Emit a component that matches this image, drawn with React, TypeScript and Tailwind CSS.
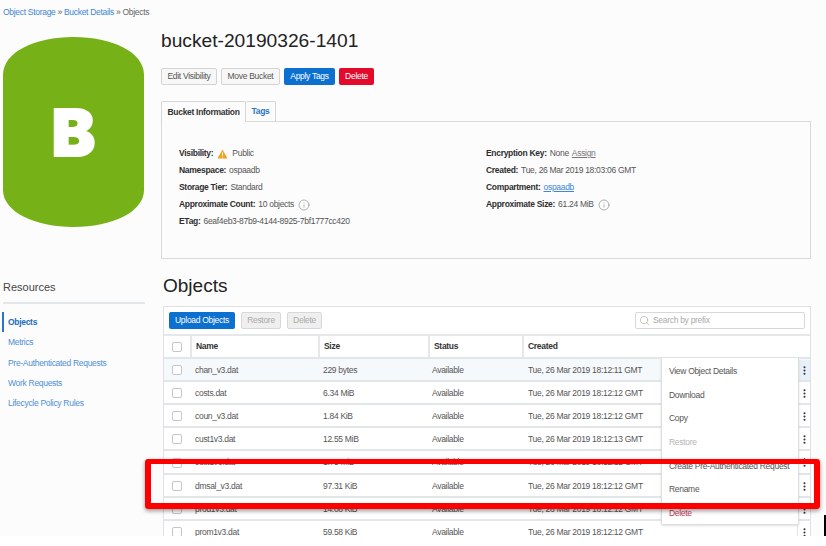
import { Info, MoreVertical, Search } from 'lucide-react';

const resources = ['Objects', 'Metrics', 'Pre-Authenticated Requests', 'Work Requests', 'Lifecycle Policy Rules'];

const objects = [
  ['chan_v3.dat', '229 bytes', 'Tue, 26 Mar 2019 18:12:11 GMT'],
  ['costs.dat', '6.34 MiB', 'Tue, 26 Mar 2019 18:12:12 GMT'],
  ['coun_v3.dat', '1.84 KiB', 'Tue, 26 Mar 2019 18:12:12 GMT'],
  ['cust1v3.dat', '12.55 MiB', 'Tue, 26 Mar 2019 18:12:13 GMT'],
  ['cust1v3.dat', '1.75 MiB', 'Tue, 26 Mar 2019 18:12:12 GMT'],
  ['dmsal_v3.dat', '97.31 KiB', 'Tue, 26 Mar 2019 18:12:12 GMT'],
  ['prod1v3.dat', '14.08 KiB', 'Tue, 26 Mar 2019 18:12:12 GMT'],
  ['prom1v3.dat', '59.58 KiB', 'Tue, 26 Mar 2019 18:12:12 GMT'],
];

const menu = ['View Object Details', 'Download', 'Copy', 'Restore', 'Create Pre-Authenticated Request', 'Rename', 'Delete'];

function Field({ label, children }: { label: string; children: React.ReactNode }) {
  return (
    <div className="flex h-[17px] items-center gap-[3px] whitespace-nowrap">
      <span className="font-bold text-[#2f2f2f]">{label}</span>
      {children}
    </div>
  );
}

function Check() {
  return <div className="h-[10px] w-[10px] rounded-[2px] border border-[#c4c6c8] bg-white" />;
}

export default function App() {
  return (
    <div className="relative h-[546px] w-[826px] overflow-hidden bg-white font-['Liberation_Sans',sans-serif] text-[8.500px] tracking-[-0.300px] text-[#555]">
      <div className="flex h-[536px] flex-col overflow-hidden bg-[#fcfcfc]">
        <div className="flex h-[25px] shrink-0 items-center gap-[2px] pl-[3px]">
          <span className="text-[#3f86d4]">Object Storage</span>
          <span>»</span>
          <span className="text-[#3f86d4]">Bucket Details</span>
          <span>»</span>
          <span className="text-[#666]">Objects</span>
        </div>

        <div className="flex min-h-0 flex-1">
          <aside className="w-[161px] shrink-0 pl-[3px]">
            <div className="relative mt-[12px] flex h-[190px] w-[141px] items-center justify-center">
              <svg viewBox="0 0 141 190" className="absolute inset-0 h-full w-full">
                <path d="M0 38C0 15 32 0 70.500 0C109 0 141 15 141 38V153C141 175 109 190 70.500 190C32 190 0 175 0 153Z" fill="#76b117" />
              </svg>
              <span className="relative font-['Inter',sans-serif] text-[65px] leading-none font-black tracking-normal text-white [-webkit-text-stroke:2px_white]">B</span>
            </div>
            <h2 className="mt-[52px] h-[16px] text-[11px] leading-[16px] tracking-normal text-[#444]">Resources</h2>
            <div className="mt-[7px] h-[2px] w-[142px] bg-[#e3e6e8]" />
            <ul className="mt-[8px]">
              {resources.map((item, i) => (
                <li
                  key={item}
                  className={i === 0
                    ? 'flex h-[20.400px] items-center border-l-2 border-[#2a76c6] pl-[4px] font-bold text-[#1a6cc0] -ml-[1px]'
                    : 'flex h-[20.400px] items-center pl-[5px] text-[#4f8fd6]'}
                >
                  {item}
                </li>
              ))}
            </ul>
          </aside>

          <main className="min-w-0 flex-1 pr-[15px]">
            <h1 className="mt-[3px] h-[25px] text-[19.200px] leading-[25px] tracking-normal text-[#222]">bucket-20190326-1401</h1>

            <div className="mt-[15px] flex h-[17px] gap-[4px]">
              <button className="w-[56px] rounded-[2px] border border-[#d4d4d4] bg-[#f7f7f7] text-[#555]">Edit Visibility</button>
              <button className="w-[59px] rounded-[2px] border border-[#d4d4d4] bg-[#f7f7f7] text-[#555]">Move Bucket</button>
              <button className="w-[51px] rounded-[2px] bg-[#0b70cf] text-white">Apply Tags</button>
              <button className="w-[35px] rounded-[2px] bg-[#e40a2c] text-white">Delete</button>
            </div>

            <div className="mt-[16px] flex h-[20px]">
              <div className="z-10 flex h-[21px] w-[85px] items-center justify-center rounded-t-[2px] border border-b-0 border-[#d4d6d8] bg-[#fcfcfc] font-bold text-[#333]">
                Bucket Information
              </div>
              <div className="flex w-[30px] items-center justify-center rounded-t-[2px] border border-b-0 border-l-0 border-[#d4d6d8] font-bold text-[#2a76c6]">
                Tags
              </div>
            </div>

            <div className="grid h-[138px] grid-cols-[307px_1fr] border border-[#d9dadb] pt-[23px] pl-[17px]">
              <div>
                <Field label="Visibility:">
                  <svg viewBox="0 0 12 11" className="mx-[1px] h-[10px] w-[11px]">
                    <path d="M6 0.500L11.500 10.500H0.500Z" fill="#f0a020" />
                    <path d="M5.500 3.500H6.500V7.500H5.500ZM5.500 8.200H6.500V9.300H5.500Z" fill="#fff" />
                  </svg>
                  <span>Public</span>
                </Field>
                <Field label="Namespace:"><span>ospaadb</span></Field>
                <Field label="Storage Tier:"><span>Standard</span></Field>
                <Field label="Approximate Count:">
                  <span>10 objects</span>
                  <Info className="ml-[1px] h-[12px] w-[12px] text-[#666]" strokeWidth={1} />
                </Field>
                <Field label="ETag:"><span>6eaf4eb3-87b9-4144-8925-7bf1777cc420</span></Field>
              </div>
              <div>
                <Field label="Encryption Key:">
                  <span>None</span>
                  <span className="text-[#777] underline">Assign</span>
                </Field>
                <Field label="Created:"><span>Tue, 26 Mar 2019 18:03:06 GMT</span></Field>
                <Field label="Compartment:"><span className="text-[#3f86d4] underline">ospaadb</span></Field>
                <Field label="Approximate Size:">
                  <span>61.24 MiB</span>
                  <Info className="ml-[1px] h-[12px] w-[12px] text-[#666]" strokeWidth={1} />
                </Field>
              </div>
            </div>

            <h2 className="mt-[14px] ml-[2px] h-[25px] text-[19px] leading-[25px] tracking-normal text-[#222]">Objects</h2>

            <section className="mt-[8px] ml-[2px] border border-b-0 border-[#dfe1e3] bg-white">
              <div className="flex h-[29px] items-center border-b-2 border-[#e6e7e8] pr-[5px] pl-[5px]">
                <button className="mr-[6px] h-[17px] w-[66px] rounded-[2px] bg-[#0b70cf] text-white">Upload Objects</button>
                <button className="mr-[6px] h-[17px] w-[40px] rounded-[2px] border border-[#d8d8d8] bg-[#efefef] text-[#aaa]">Restore</button>
                <button className="h-[17px] w-[35px] rounded-[2px] border border-[#d8d8d8] bg-[#efefef] text-[#aaa]">Delete</button>
                <div className="ml-auto flex h-[17px] w-[170px] items-center gap-[3px] rounded-[2px] border border-[#d8d8d8] pl-[3px] text-[#aaa]">
                  <Search className="h-[11px] w-[11px] text-[#888]" strokeWidth={1} />
                  <span>Search by prefix</span>
                </div>
              </div>

              <div className="grid h-[23px] grid-cols-[26px_128px_110px_94px_1fr] items-stretch border-b-2 border-[#e3e6e8] font-bold text-[#333]">
                <div className="flex items-center justify-center"><Check /></div>
                <div className="flex items-center border-l-2 border-[#e6e7e8] pl-[4px]">Name</div>
                <div className="flex items-center border-l-2 border-[#e6e7e8] pl-[4px]">Size</div>
                <div className="flex items-center border-l-2 border-[#e6e7e8] pl-[4px]">Status</div>
                <div className="flex items-center border-l-2 border-[#e6e7e8] pl-[4px]">Created</div>
              </div>

              {objects.map((row, i) => (
                <div
                  key={row[0] + i}
                  className={`grid grid-cols-[26px_128px_110px_94px_1fr_13px] items-center border-b-2 border-[#e3e6e8] pt-[1px] ${i === 4 ? 'h-[24px]' : 'h-[23px]'} ${i === 0 ? 'bg-[#f6f9fc]' : ''}`}
                >
                  <div className="flex justify-center"><Check /></div>
                  <div className="pl-[5px]">{row[0]}</div>
                  <div className="pl-[5px]">{row[1]}</div>
                  <div className="pl-[4px]">Available</div>
                  <div className="pl-[6px]">{row[2]}</div>
                  <div className={`flex h-full items-center justify-center border-l border-[#e3e6e8] ${i === 0 ? 'bg-[#e8f1fa]' : ''}`}>
                    <MoreVertical className="h-[11px] w-[11px] text-[#333]" strokeWidth={2.500} />
                  </div>
                </div>
              ))}
            </section>
          </main>
        </div>
      </div>

      {/* open row menu */}
      <ul className="absolute top-[358px] left-[661px] h-[167px] w-[138px] rounded-b-[2px] border border-t-0 border-[#dcdee0] bg-white pt-[1.500px] pl-[7px] shadow-sm">
        {menu.map(item => (
          <li
            key={item}
            className={`flex h-[23.700px] items-center whitespace-nowrap ${item === 'Restore' ? 'text-[#b5b5b5]' : item === 'Delete' ? 'text-[#c4385a]' : 'text-[#555]'}`}
          >
            {item}
          </li>
        ))}
      </ul>

      {/* annotation */}
      <div className="absolute top-[459px] left-[145px] h-[50px] w-[675px] rounded-[3px] border-[6px] border-t-[5px] border-[#fe0000] shadow-[0_2px_4px_rgba(0,0,0,0.4)]" />
      <div className="absolute top-[515px] left-[824px] h-[21px] w-[2px] bg-black" />
    </div>
  );
}
